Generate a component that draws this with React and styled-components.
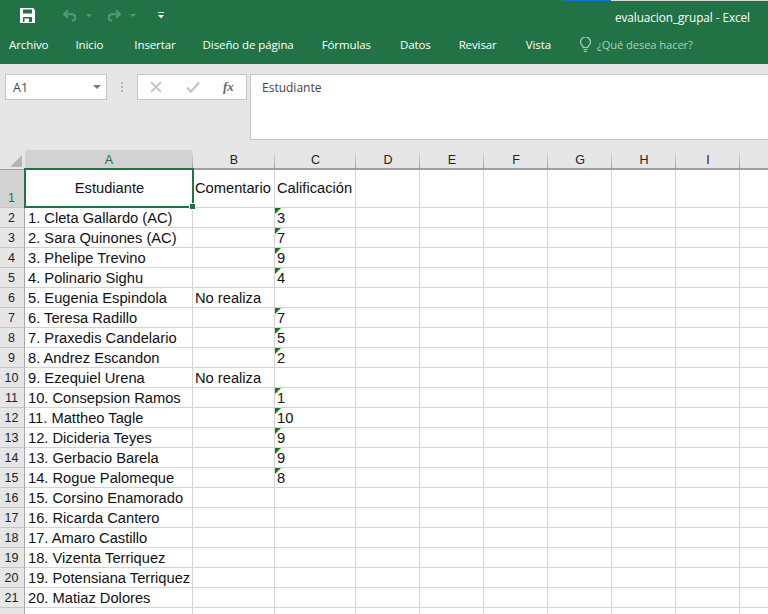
import React from "react";
import styled, { createGlobalStyle } from "styled-components";

const Global = createGlobalStyle`
  html, body { margin: 0; padding: 0; background: #fff; }
  #root { width: 768px; height: 614px; overflow: hidden; }
`;

const GREEN = "#217346";
const COLS = [168, 82, 81, 64, 64, 64, 64, 64, 64, 64];
const LETTERS = ["A", "B", "C", "D", "E", "F", "G", "H", "I", ""];

const rowsData = [
  ["1. Cleta Gallardo (AC)", "", "3"],
  ["2. Sara Quinones (AC)", "", "7"],
  ["3. Phelipe Trevino", "", "9"],
  ["4. Polinario Sighu", "", "4"],
  ["5. Eugenia Espindola", "No realiza", ""],
  ["6. Teresa Radillo", "", "7"],
  ["7. Praxedis Candelario", "", "5"],
  ["8. Andrez Escandon", "", "2"],
  ["9. Ezequiel Urena", "No realiza", ""],
  ["10. Consepsion Ramos", "", "1"],
  ["11. Mattheo Tagle", "", "10"],
  ["12. Dicideria Teyes", "", "9"],
  ["13. Gerbacio Barela", "", "9"],
  ["14. Rogue Palomeque", "", "8"],
  ["15. Corsino Enamorado", "", ""],
  ["16. Ricarda Cantero", "", ""],
  ["17. Amaro Castillo", "", ""],
  ["18. Vizenta Terriquez", "", ""],
  ["19. Potensiana Terriquez", "", ""],
  ["20. Matiaz Dolores", "", ""],
];

const Page = styled.div`
  width: 768px;
  height: 614px;
  overflow: hidden;
  display: flex;
  flex-direction: column;
  background: #fff;
`;

const Header = styled.header`
  height: 64px;
  flex: none;
  background: ${GREEN};
  color: #fff;
  font-family: "Open Sans", "Noto Sans", sans-serif;
  position: relative;
`;

const TopEdge = styled.div`
  position: absolute;
  top: 0;
  left: 563px;
  right: 0;
  height: 1px;
  display: flex;
`;
const TopBlue = styled.span`
  width: 48px;
  background: #0a74d4;
`;
const TopGray = styled.span`
  flex: 1;
  background: #d8d8d8;
`;

const TitleBar = styled.div`
  height: 31px;
  display: flex;
  align-items: center;
  padding: 0 18px 0 20px;
`;

const QuickTools = styled.div`
  display: flex;
  align-items: center;
`;

const ToolIcon = styled.svg`
  display: block;
  flex: none;
  margin-left: ${(p) => p.$ml || 0}px;
`;

const WindowTitle = styled.div`
  margin-left: auto;
  font-size: 11.8px;
  letter-spacing: -0.08px;
  padding-top: 2px;
`;

const TabBar = styled.nav`
  height: 33px;
  display: flex;
  align-items: center;
  gap: 29px;
  padding: 0 0 6px 9px;
  box-sizing: border-box;
  font-size: 11.5px;
  letter-spacing: -0.1px;
`;

const Tab = styled.span`
  white-space: nowrap;
  margin-right: ${(p) => p.$mr || 0}px;
`;

const Help = styled.span`
  display: flex;
  align-items: center;
  gap: 5px;
  font-size: 11.2px;
  color: #a9d0bc;
`;

const FormulaArea = styled.section`
  height: 86px;
  flex: none;
  background: #e6e6e6;
  display: flex;
  align-items: flex-start;
  padding: 10px 0 0 5px;
  box-sizing: border-box;
  font-family: "Open Sans", "Noto Sans", sans-serif;
`;

const NameBox = styled.div`
  width: 102px;
  height: 26px;
  box-sizing: border-box;
  background: #fff;
  border: 1px solid #c6c6c6;
  display: flex;
  align-items: center;
  justify-content: space-between;
  padding: 0 5px 0 7px;
  font-size: 12.5px;
  color: #444;
`;

const Arrow = styled.span`
  width: 0;
  height: 0;
  border-left: 4px solid transparent;
  border-right: 4px solid transparent;
  border-top: 4px solid #777;
`;

const Dots = styled.div`
  width: 2px;
  margin: 8px 14px 0 14px;
  height: 10px;
  flex: none;
  background: repeating-linear-gradient(to bottom, #b5b5b5 0 2px, transparent 2px 4px);
`;

const FxBox = styled.div`
  width: 110px;
  height: 26px;
  box-sizing: border-box;
  background: #fff;
  border: 1px solid #c6c6c6;
  display: flex;
  align-items: center;
  padding-left: 12px;
`;

const FxGlyph = styled.span`
  margin-left: 23px;
  font-family: "Liberation Serif", serif;
  font-style: italic;
  font-weight: 700;
  font-size: 13px;
  color: #666;
`;

const FormulaInput = styled.div`
  margin-left: 3px;
  flex: 1;
  height: 66px;
  box-sizing: border-box;
  background: #fff;
  border: 1px solid #c6c6c6;
  border-right: 0;
  padding: 4px 0 0 11px;
  font-size: 12px;
  color: #444;
`;

const Sheet = styled.div`
  flex: 1;
  position: relative;
  background: #e6e6e6;
  font-family: "Liberation Sans", Arial, sans-serif;
`;

const Row = styled.div`
  display: flex;
  height: ${(p) => p.$h}px;
`;

const Corner = styled.div`
  width: 25px;
  flex: none;
  box-sizing: border-box;
  position: relative;
  border-bottom: 1px solid #a0a0a0;
  &::after {
    content: "";
    position: absolute;
    right: 3px;
    bottom: 2px;
    width: 0;
    height: 0;
    border-left: 12px solid transparent;
    border-bottom: 12px solid #b5b5b5;
  }
`;

const ColHead = styled.div`
  width: ${(p) => p.$w}px;
  flex: none;
  box-sizing: border-box;
  display: flex;
  align-items: center;
  justify-content: center;
  padding: 1px 0 0 1px;
  font-size: 12.5px;
  color: ${(p) => (p.$active ? GREEN : "#222")};
  background: ${(p) => (p.$active ? "#d2d2d2" : "#e6e6e6")};
  border-right: 1px solid;
  border-bottom: 1px solid;
  border-image: linear-gradient(to bottom, #e6e6e6, #9c9c9c) 1;
  box-shadow: inset 0 -1px 0 #a0a0a0;
`;

const RowHead = styled.div`
  width: 25px;
  flex: none;
  box-sizing: border-box;
  display: flex;
  align-items: ${(p) => (p.$tall ? "flex-end" : "center")};
  justify-content: center;
  padding-right: 1px;
  padding-bottom: ${(p) => (p.$tall ? 2 : 0)}px;
  font-size: 12.5px;
  color: ${(p) => (p.$active ? GREEN : "#222")};
  background: ${(p) => (p.$active ? "#d2d2d2" : "#e6e6e6")};
  border-bottom: 1px solid #c6c6c6;
  border-right: 1px solid #a8a8a8;
`;

const Cell = styled.div`
  width: ${(p) => p.$w}px;
  flex: none;
  box-sizing: border-box;
  position: relative;
  background: #fff;
  border-right: 1px solid #d4d4d4;
  border-bottom: 1px solid #d4d4d4;
  display: flex;
  align-items: ${(p) => (p.$head ? "center" : "flex-end")};
  justify-content: ${(p) => (p.$center ? "center" : "flex-start")};
  padding: 0 0 0 ${(p) => (p.$wide ? 3 : 2)}px;
  font-size: 14.7px;
  line-height: 17px;
  color: #111;
  white-space: nowrap;
`;

const NoteMark = styled.span`
  position: absolute;
  left: 0;
  top: 0;
  width: 0;
  height: 0;
  border-top: 6px solid #107c10;
  border-right: 6px solid transparent;
`;

const Selection = styled.div`
  position: absolute;
  left: 24px;
  top: 18px;
  width: 170px;
  height: 40px;
  box-sizing: border-box;
  border: 2px solid ${GREEN};
  pointer-events: none;
  &::after {
    content: "";
    position: absolute;
    right: -4px;
    bottom: -4px;
    width: 5px;
    height: 5px;
    background: ${GREEN};
    border: 1px solid #fff;
  }
`;

const Save = () => (
  <ToolIcon width="15" height="15" viewBox="0 0 15 15">
    <path fillRule="evenodd" fill="#fff" d="M0 0h13l2 2v13H0zM3 1.500v4h9v-4zM3 9v5h1.500v-3.500H9V14h3V9z" />
  </ToolIcon>
);

const Undo = ({ flip, ml }) => (
  <ToolIcon $ml={ml} width="16" height="13" viewBox="0 0 16 13" style={flip ? { transform: "scaleX(-1)" } : undefined}>
    <path d="M6 1.500 2 5.200l4 3.700M2.500 5.200h7c2.400 0 3.800 1.500 3.800 3.200s-1.200 3.200-3.500 3.200" fill="none" stroke="#57977a" strokeWidth="2" />
  </ToolIcon>
);

const Caret = ({ ml }) => (
  <ToolIcon $ml={ml} width="6" height="3" viewBox="0 0 6 3">
    <path d="M0 0h6L3 3z" fill="#57977a" />
  </ToolIcon>
);

const Customize = () => (
  <ToolIcon $ml={22} width="6" height="7" viewBox="0 0 6 7">
    <path d="M0 0h6v1H0zM0 3h6L3 6.500z" fill="#fff" />
  </ToolIcon>
);

const Bulb = () => (
  <ToolIcon width="13" height="16" viewBox="0 0 13 16">
    <path d="M4.300 10.500C4 8.800 1.500 7.800 1.500 5a5 5 0 0 1 10 0c0 2.800-2.500 3.800-2.800 5.500zM4.500 12.500h4M5 14.500h3" fill="none" stroke="#a9d0bc" strokeWidth="1.200" />
  </ToolIcon>
);

const Cross = () => (
  <ToolIcon width="12" height="12" viewBox="0 0 12 12">
    <path d="M1 1l10 10M11 1 1 11" stroke="#c4c4c4" strokeWidth="1.800" fill="none" />
  </ToolIcon>
);

const Check = () => (
  <ToolIcon $ml={24} width="14" height="12" viewBox="0 0 14 12">
    <path d="M1 6.500 5 10.500 13 1.500" stroke="#c4c4c4" strokeWidth="2.200" fill="none" />
  </ToolIcon>
);

export default function App() {
  return (
    <Page>
      <Global />
      <Header>
        <TopEdge>
          <TopBlue />
          <TopGray />
        </TopEdge>
        <TitleBar>
          <QuickTools>
            <Save />
            <Undo ml={27} />
            <Caret ml={8} />
            <Undo flip ml={14} />
            <Caret ml={8} />
            <Customize />
          </QuickTools>
          <WindowTitle>evaluacion_grupal - Excel</WindowTitle>
        </TitleBar>
        <TabBar>
          <Tab $mr={-2}>Archivo</Tab>
          <Tab $mr={2}>Inicio</Tab>
          <Tab $mr={-2}>Insertar</Tab>
          <Tab $mr={-1}>Diseño de página</Tab>
          <Tab>Fórmulas</Tab>
          <Tab $mr={-1}>Datos</Tab>
          <Tab>Revisar</Tab>
          <Tab $mr={-1}>Vista</Tab>
          <Help>
            <Bulb />
            ¿Qué desea hacer?
          </Help>
        </TabBar>
      </Header>

      <FormulaArea>
        <NameBox>
          A1
          <Arrow />
        </NameBox>
        <Dots />
        <FxBox>
          <Cross />
          <Check />
          <FxGlyph>fx</FxGlyph>
        </FxBox>
        <FormulaInput>Estudiante</FormulaInput>
      </FormulaArea>

      <Sheet>
        <Row $h={20}>
          <Corner />
          {COLS.map((w, i) => (
            <ColHead key={i} $w={w} $active={i === 0}>
              {LETTERS[i]}
            </ColHead>
          ))}
        </Row>
        <Row $h={38}>
          <RowHead $tall $active>1</RowHead>
          {COLS.map((w, i) => (
            <Cell key={i} $w={w} $head $center={i === 0}>
              {["Estudiante", "Comentario", "Calificación"][i] || ""}
            </Cell>
          ))}
        </Row>
        {rowsData.map((r, idx) => (
          <Row key={idx} $h={20}>
            <RowHead>{idx + 2}</RowHead>
            {COLS.map((w, i) => (
              <Cell key={i} $w={w} $wide={i === 0}>
                {i === 2 && r[2] ? <NoteMark /> : null}
                {r[i] || ""}
              </Cell>
            ))}
          </Row>
        ))}
        <Row $h={20}>
          <RowHead />
          {COLS.map((w, i) => (
            <Cell key={i} $w={w} />
          ))}
        </Row>
        <Selection />
      </Sheet>
    </Page>
  );
}
